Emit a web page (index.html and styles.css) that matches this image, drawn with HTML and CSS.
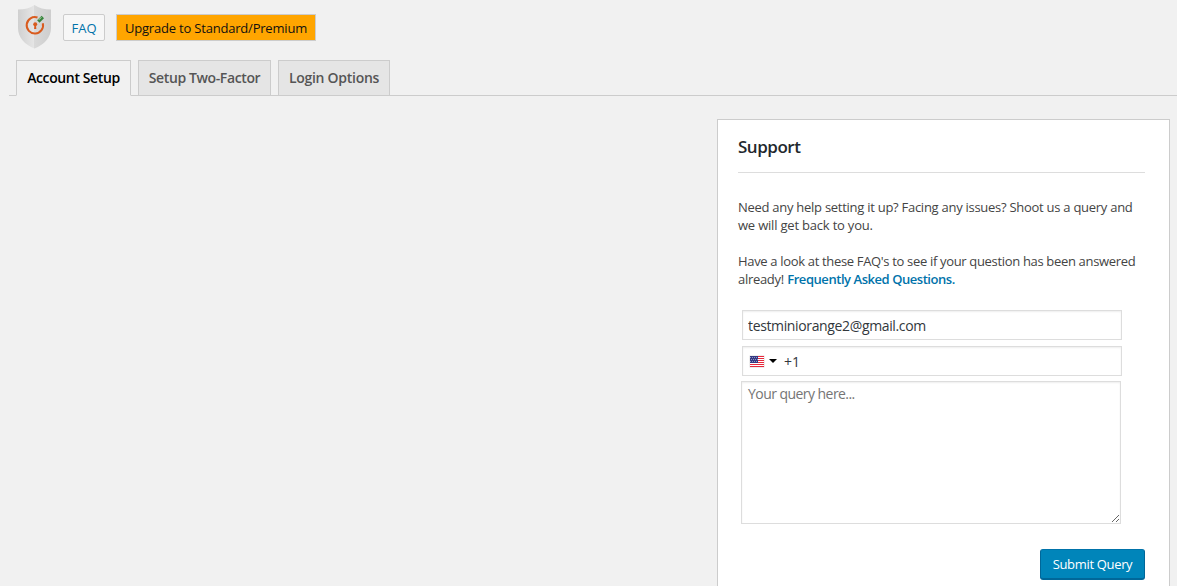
FILE: index.html
```html
<!DOCTYPE html>
<html lang="en">
<head>
<meta charset="utf-8">
<title>Two-Factor Account Setup</title>
<link rel="stylesheet" href="styles.css">
</head>
<body>
<header class="toolbar">
  <svg class="logo" width="33" height="44" viewBox="0 0 33 44">
    <defs><linearGradient id="shine" x1="0" x2="1" y1="0" y2="0"><stop offset="0" stop-color="#d0d0d0"/><stop offset=".5" stop-color="#e6e6e6"/><stop offset=".5" stop-color="#d9d9d9"/><stop offset="1" stop-color="#cecece"/></linearGradient></defs>
    <path d="M16.500 0Q10 4.500 0 4.500V23C0 33 7 39.500 16.500 43.500C26 39.500 33 33 33 23V4.500Q23 4.500 16.500 0Z" fill="url(#shine)"/>
    <path d="M19.500 12.500A8.200 8.200 0 1 0 24.800 18.200" fill="none" stroke="#d95b1e" stroke-width="2"/>
    <circle cx="17.200" cy="19.200" r="2" fill="#d95b1e"/><path d="M16.400 20h1.600l.3 4h-2.200z" fill="#d95b1e"/>
    <path d="M20.300 16.500L24.800 12" stroke="#37853b" stroke-width="3.400"/><path d="M20.800 14.800L23.300 12.300" stroke="#c5dfc3" stroke-width="1"/>
  </svg>
  <a class="button faq">FAQ</a>
  <a class="button upgrade">Upgrade to Standard/Premium</a>
</header>
<nav class="tabs">
  <a class="tab tab-active">Account Setup</a>
  <a class="tab tab-two">Setup Two-Factor</a>
  <a class="tab tab-login">Login Options</a>
</nav>
<main class="content">
  <section class="support">
    <h3 class="title">Support</h3>
    <hr class="rule">
    <p class="copy"><span class="l1">Need any help setting it up? Facing any issues? Shoot us a query and</span><br><span class="l2">we will get back to you.</span></p>
    <p class="copy"><span class="l3">Have a look at these FAQ's to see if your question has been answered</span><br><span class="l4">already!</span> <a class="link">Frequently Asked Questions.</a></p>
    <form class="form">
      <input class="field email" type="text" value="testminiorange2@gmail.com">
      <div class="field phone">
        <svg class="flag" width="16" height="13" viewBox="0 0 16 13">
          <rect x=".5" y=".5" width="15" height="12" fill="#ddd"/>
          <path fill="#fff" d="M1 1h14v11H1z"/>
          <path fill="#e8283c" d="M1 1h14v1H1zM1 3h14v1H1zM1 5h14v1H1zM1 7h14v1H1zM1 9h14v1H1zM1 11h14v1H1z"/>
          <path fill="#343a82" d="M1 1h8v7H1z"/>
          <path stroke="#8e94c5" stroke-dasharray="1 1" d="M1 2.500h8M2 4.500h7M1 6.500h8"/>
        </svg>
        <span class="arrow"></span>
        <span class="code">+1</span>
      </div>
      <textarea class="query" placeholder="Your query here..."></textarea>
      <button class="submit" type="button">Submit Query</button>
    </form>
  </section>
</main>
</body>
</html>
```
FILE: styles.css
```css
* { box-sizing: border-box; }
body {
  margin: 0;
  background: #f1f1f1;
  color: #444;
  font: 13px/18px "Open Sans", "Noto Sans", sans-serif;
}
.toolbar {
  display: flex;
  align-items: flex-start;
  height: 60px;
  padding: 5px 0 0 18px;
}
.logo { flex: none; }
.button {
  height: 27px;
  margin-top: 9px;
  border: 1px solid #ccc;
  line-height: 27px;
  text-align: center;
  white-space: nowrap;
}
.faq {
  width: 42px;
  margin-left: 12px;
  border-radius: 2px;
  background: #f7f7f7;
  color: #0073aa;
}
.upgrade {
  width: 200px;
  margin-left: 11px;
  background: #ffa500;
  color: #111;
  font-weight: 500;
  letter-spacing: -.2px;
}
.tabs {
  display: flex;
  gap: 7px;
  height: 36px;
  margin-left: 9px;
  padding-left: 7px;
  border-bottom: 1px solid #ccc;
}
.tab {
  height: 36px;
  border: 1px solid #ccc;
  background: #e5e5e5;
  color: #555;
  font-size: 14px;
  font-weight: 600;
  letter-spacing: -.38px;
  line-height: 34px;
  text-align: center;
  white-space: nowrap;
}
.tab-active {
  width: 115px;
  border-bottom-color: #f1f1f1;
  background: #f1f1f1;
  color: #000;
}
.tab-two { width: 133px; }
.tab-login { width: 112px; letter-spacing: -.28px; }
.content {
  display: flex;
  justify-content: flex-end;
  padding: 23px 7px 0 0;
}
.support {
  width: 453px;
  height: 467px;
  padding: 0 24px 0 20px;
  border: 1px solid #ccc;
  border-bottom: 0;
  background: #fff;
}
.title {
  margin: 17px 0 15px;
  color: #23282d;
  font-size: 17px;
  font-weight: 600;
  letter-spacing: -.48px;
  line-height: 20px;
}
.rule {
  height: 1px;
  margin: 0 0 25px;
  border: 0;
  background: #ddd;
}
.copy {
  margin: 0 0 18px;
  white-space: nowrap;
}
.l1 { letter-spacing: -.27px; }
.l2 { letter-spacing: -.2px; }
.l3 { letter-spacing: -.33px; }
.l4 { letter-spacing: -.3px; }
.link {
  color: #0073aa;
  font-weight: 600;
  letter-spacing: -.45px;
}
.form {
  display: flex;
  flex-direction: column;
  margin-top: 22px;
}
.field {
  width: 380px;
  height: 30px;
  margin: 0 0 6px 4px;
  border: 1px solid #ddd;
  box-shadow: inset 0 1px 2px rgba(0, 0, 0, .07);
  background: #fff;
  color: #32373c;
}
.email {
  padding: 1px 5px;
  font: 14px "Open Sans", sans-serif;
  letter-spacing: -.36px;
}
.phone {
  display: flex;
  align-items: center;
  margin-bottom: 5px;
  padding-left: 6px;
}
.arrow {
  margin-left: 4px;
  border: 4px solid transparent;
  border-top-color: #000;
  border-bottom: 0;
}
.code { margin: 2px 0 0 7px; font-size: 14px; }
.query {
  width: 380px;
  height: 143px;
  margin: 0 0 25px 3px;
  padding: 2px 6px;
  border: 1px solid #ddd;
  border-radius: 0;
  box-shadow: inset 0 1px 2px rgba(0, 0, 0, .07);
  font: 14px/19px "Open Sans", sans-serif;
  letter-spacing: -.55px;
  outline: none;
}
.query::placeholder { color: #757575; }
.submit {
  align-self: flex-end;
  width: 105px;
  height: 31px;
  padding: 0;
  border: 1px solid #0073aa;
  border-color: #0073aa #006799 #006799;
  border-bottom-width: 2px;
  border-radius: 3px;
  background: #0085ba;
  color: #fff;
  font: 13px "Open Sans", sans-serif;
  letter-spacing: -.33px;
}
```
